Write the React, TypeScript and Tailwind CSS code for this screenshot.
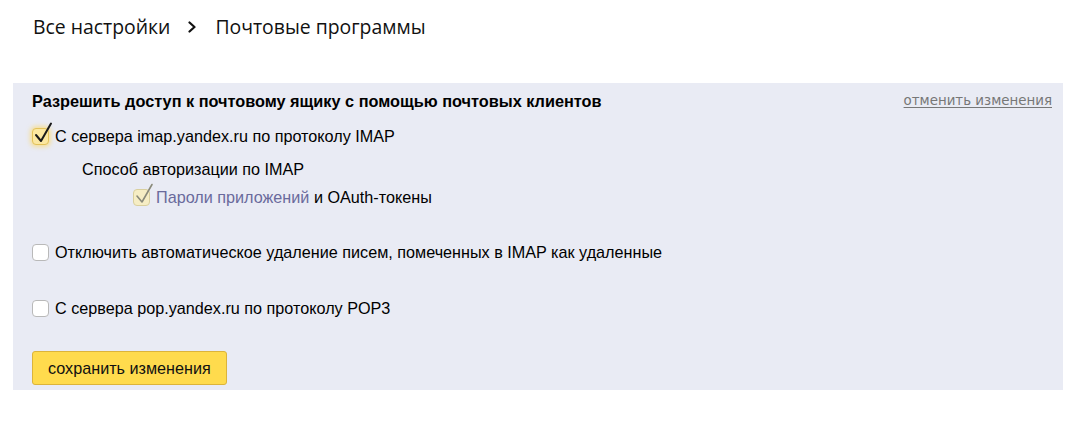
import { useState } from "react";

function Check({ checked, faded, onChange }: { checked: boolean; faded?: boolean; onChange: () => void }) {
  return (
    <button
      type="button"
      onClick={onChange}
      className={`relative h-[17px] w-[17px] shrink-0 rounded-[4px] border ${
        checked
          ? faded
            ? "border-[#d9cf9e] bg-[#f6edc4]"
            : "border-[#e3c25a] bg-[#fbe7a0] shadow-[0_0_4px_2px_rgba(255,214,80,0.55)]"
          : "border-[#b9b9b9] bg-white"
      }`}
    >
      {checked ? (
        <svg viewBox="0 0 20 22" className="absolute -top-[7px] left-[1px] h-[22px] w-[20px]" fill="none">
          <path
            d="M2 13 L7 19 L17 1.5"
            stroke={faded ? "#8a8a7a" : "#1a1a1a"}
            strokeWidth={faded ? 1.6 : 2}
            strokeLinecap="round"
            strokeLinejoin="round"
          />
        </svg>
      ) : null}
    </button>
  );
}

export default function App() {
  const [imap, setImap] = useState(true);
  const [appPasswords, setAppPasswords] = useState(true);
  const [keepDeleted, setKeepDeleted] = useState(false);
  const [pop, setPop] = useState(false);

  return (
    <div className="h-[421px] w-[1079px] bg-white font-['Liberation_Sans',Arial,sans-serif] text-[16.2px] leading-[20px] text-black">
      <div className="pt-[12px]">
        <div className="flex h-[30px] items-center pl-[33px] font-['Open_Sans',sans-serif] text-[19.4px] text-[#111]">
          <span>Все настройки</span>
          <svg viewBox="0 0 8 12" className="ml-[18px] mr-[19px] h-[12px] w-[8px]" fill="none">
            <path d="M1.5 1.5 L6.5 6 L1.5 10.5" stroke="#111" strokeWidth="2.2" strokeLinecap="round" strokeLinejoin="round" />
          </svg>
          <span>Почтовые программы</span>
        </div>
      </div>

      <div className="ml-[13px] mt-[41px] w-[1050px] bg-[#e9ebf4] pb-[5px] pl-[19px] pr-[11px] pt-[8px]">
        <div className="flex h-[20px] items-center justify-between">
          <div className="text-[16.3px] font-bold">Разрешить доступ к почтовому ящику с помощью почтовых клиентов</div>
          <a href="#" className="font-['DejaVu_Sans',Verdana,sans-serif] text-[13.4px] text-[#777] underline underline-offset-2">
            отменить изменения
          </a>
        </div>

        <label className="mt-[15px] flex h-[20px] items-center gap-[6px]">
          <Check checked={imap} onChange={() => setImap(!imap)} />
          <span>С сервера imap.yandex.ru по протоколу IMAP</span>
        </label>

        <div className="mt-[13px] h-[20px] pl-[50px]">Способ авторизации по IMAP</div>

        <label className="mt-[8px] flex h-[20px] items-center gap-[6px] pl-[101px]">
          <Check checked={appPasswords} faded onChange={() => setAppPasswords(!appPasswords)} />
          <span>
            <span className="text-[#6a6a9c]">Пароли приложений</span> и OAuth-токены
          </span>
        </label>

        <label className="mt-[35px] flex h-[20px] items-center gap-[6px]">
          <Check checked={keepDeleted} onChange={() => setKeepDeleted(!keepDeleted)} />
          <span>Отключить автоматическое удаление писем, помеченных в IMAP как удаленные</span>
        </label>

        <label className="mt-[36px] flex h-[20px] items-center gap-[6px]">
          <Check checked={pop} onChange={() => setPop(!pop)} />
          <span>С сервера pop.yandex.ru по протоколу POP3</span>
        </label>

        <button
          type="button"
          className="mt-[33px] block h-[34px] rounded-[3px] border border-[#dcb43a] bg-[#ffdb4d] px-[15px] text-[16.2px] text-[#111]"
        >
          сохранить изменения
        </button>
      </div>
    </div>
  );
}
